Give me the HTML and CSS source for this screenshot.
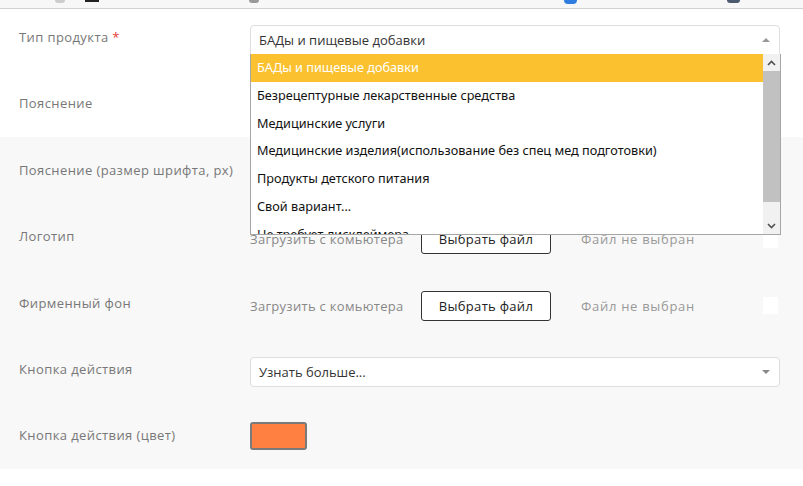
FILE: index.html
```html
<!DOCTYPE html>
<html lang="ru">
<head>
<meta charset="utf-8">
<title>Форма</title>
<link rel="stylesheet" href="styles.css">
</head>
<body>
<div class="topbar">
  <span class="fav fav-gray" style="margin-left:55px"></span>
  <span class="fav fav-black" style="margin-left:20px"></span>
  <span class="fav fav-gray2" style="margin-left:150px"></span>
  <span class="fav fav-blue" style="margin-left:305px"></span>
  <span class="fav fav-dark" style="margin-left:150px"></span>
</div>
<div class="page">
  <div class="section white">
    <div class="row">
      <div class="label">Тип продукта <span class="req">*</span></div>
      <div class="field">
        <div class="select open">
          <span class="select-text">БАДы и пищевые добавки</span>
          <span class="caret up"></span>
        </div>
        <div class="dropdown">
          <div class="options">
            <div class="option active">БАДы и пищевые добавки</div>
            <div class="option">Безрецептурные лекарственные средства</div>
            <div class="option">Медицинские услуги</div>
            <div class="option">Медицинские изделия(использование без спец мед подготовки)</div>
            <div class="option">Продукты детского питания</div>
            <div class="option">Свой вариант...</div>
            <div class="option">Не требует дисклеймера</div>
          </div>
          <div class="scrollbar">
            <div class="sb-btn">
              <svg width="9" height="6" viewBox="0 0 9 6"><path d="M1 5 L4.5 1.5 L8 5" fill="none" stroke="#505050" stroke-width="1.6"/></svg>
            </div>
            <div class="sb-thumb"></div>
            <div class="sb-track"></div>
            <div class="sb-btn">
              <svg width="9" height="6" viewBox="0 0 9 6"><path d="M1 1 L4.5 4.5 L8 1" fill="none" stroke="#505050" stroke-width="1.6"/></svg>
            </div>
          </div>
        </div>
      </div>
    </div>
    <div class="row">
      <div class="label">Пояснение</div>
      <div class="field"></div>
    </div>
  </div>
  <div class="section gray">
    <div class="row">
      <div class="label">Пояснение (размер шрифта, px)</div>
      <div class="field"></div>
    </div>
    <div class="row">
      <div class="label">Логотип</div>
      <div class="field file">
        <span class="upload">Загрузить с комьютера</span>
        <span class="btn">Выбрать файл</span>
        <span class="nofile">Файл не выбран</span>
        <span class="preview"></span>
      </div>
    </div>
    <div class="row">
      <div class="label">Фирменный фон</div>
      <div class="field file">
        <span class="upload">Загрузить с комьютера</span>
        <span class="btn">Выбрать файл</span>
        <span class="nofile">Файл не выбран</span>
        <span class="preview"></span>
      </div>
    </div>
    <div class="row">
      <div class="label">Кнопка действия</div>
      <div class="field">
        <div class="select">
          <span class="select-text">Узнать больше...</span>
          <span class="caret down"></span>
        </div>
      </div>
    </div>
    <div class="row">
      <div class="label">Кнопка действия (цвет)</div>
      <div class="field">
        <div class="swatch"></div>
      </div>
    </div>
  </div>
</div>
</body>
</html>
```
FILE: styles.css
```css
* { box-sizing: border-box; }
html, body { margin: 0; padding: 0; background: #fff; }
body {
  font-family: "Open Sans", "Noto Sans", sans-serif;
  font-size: 13px;
  color: #333;
  width: 803px;
  height: 486px;
  overflow: hidden;
}
.topbar {
  position: fixed;
  top: 0; left: 0; right: 0;
  height: 9px;
  background: #f7f7f7;
  border-bottom: 1px solid #d2d2d2;
  display: flex;
  align-items: flex-start;
  z-index: 5;
}
.fav { display: block; height: 3px; }
.fav-gray { width: 10px; background: #ccc; border-radius: 0 0 4px 4px; }
.fav-black { width: 14px; height: 2px; background: #222; }
.fav-gray2 { width: 10px; height: 3px; background: #999; border-radius: 0 0 5px 5px; }
.fav-blue { width: 13px; height: 4px; background: #2f7de1; border-radius: 0 0 7px 7px; }
.fav-dark { width: 13px; height: 3px; background: #4d5b70; border-radius: 0 0 7px 7px; }

.page { padding-top: 4px; }
.section.white { background: #fff; }
.section.gray { background: #f8f8f8; }
.row {
  height: 66.4px;
  display: flex;
  align-items: flex-start;
  padding: 21px 0 0 19px;
}
.label {
  width: 231px;
  flex: none;
  padding-top: 3px;
  line-height: 18px;
  color: #777;
  letter-spacing: 0.4px;
}
.req { color: #e53935; letter-spacing: 0; }
.field {
  width: 530px;
  position: relative;
}
.select {
  height: 30px;
  border: 1px solid #dedede;
  border-radius: 4px;
  background: #fff;
  display: flex;
  align-items: center;
  justify-content: space-between;
  padding: 0 9px 0 8px;
  color: #333;
}
.select.open { border-radius: 4px 4px 0 0; }
.caret {
  width: 0; height: 0;
  border-left: 4px solid transparent;
  border-right: 4px solid transparent;
}
.caret.up { border-bottom: 4px solid #999; }
.caret.down { border-top: 4px solid #888; }

.dropdown {
  position: absolute;
  top: 29px;
  left: 0;
  width: 531px;
  height: 181px;
  border: 1px solid #a6a6a6;
  border-top: none;
  background: #fff;
  display: flex;
  z-index: 3;
}
.options {
  flex: 1;
  overflow: hidden;
}
.option {
  height: 27.8px;
  line-height: 27.8px;
  padding-left: 6px;
  color: #111;
  white-space: nowrap;
  font-family: "Noto Sans", "Open Sans", sans-serif;
  font-size: 12.7px;
}
.option.active {
  background: #fbc12f;
  color: #fff;
}
.scrollbar {
  width: 17px;
  flex: none;
  display: flex;
  flex-direction: column;
  background: #f1f1f1;
}
.sb-btn {
  height: 17px;
  display: flex;
  align-items: center;
  justify-content: center;
  background: #f1f1f1;
}
.sb-thumb {
  height: 131px;
  background: #c1c1c1;
}
.sb-track { flex: 1; }

.file {
  display: flex;
  align-items: center;
  height: 30px;
}
.upload { color: #888; width: 171px; flex: none; letter-spacing: 0.3px; }
.btn {
  width: 130px;
  height: 30px;
  flex: none;
  border: 1px solid #333;
  border-radius: 3px;
  background: #fff;
  color: #222;
  display: flex;
  align-items: center;
  justify-content: center;
  letter-spacing: 0.3px;
}
.nofile { color: #999; margin-left: 30px; letter-spacing: 0.7px; }
.preview {
  margin-left: auto;
  margin-right: 2px;
  width: 15px;
  height: 17px;
  background: #fff;
}
.swatch {
  width: 57px;
  height: 28px;
  margin-top: -1px;
  background: #ff8040;
  border: 2px solid #7a7a7a;
  border-radius: 3px;
}
```
